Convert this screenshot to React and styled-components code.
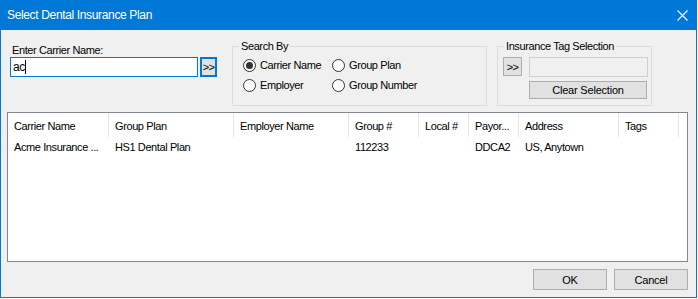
import React from 'react';
import styled, { createGlobalStyle } from 'styled-components';

const Global = createGlobalStyle`
  html, body { margin: 0; padding: 0; background: #ffffff; }
  body {
    font-family: "Liberation Sans", Arial, sans-serif;
    font-size: 11px;
    letter-spacing: -0.4px;
    color: #000;
  }
  #root { width: 698px; height: 299px; }
`;

const Window = styled.div`
  width: 697px;
  height: 298px;
  box-sizing: border-box;
  border: 1px solid #0078d7;
  border-top: none;
  background: #f0f0f0;
  display: flex;
  flex-direction: column;
`;

const TitleBar = styled.div`
  height: 30px;
  flex: none;
  background: #0078d7;
  color: #fff;
  display: flex;
  align-items: center;
  justify-content: space-between;
  padding: 0 8px 0 6px;
  font-size: 12px;
  letter-spacing: -0.35px;
`;

const Content = styled.div`
  flex: 1;
  display: flex;
  flex-direction: column;
  padding: 10px 8px 7px 6px;
  min-height: 0;
`;

const TopRow = styled.div`
  display: flex;
  align-items: flex-start;
  height: 66px;
  flex: none;
`;

const CarrierColumn = styled.div`
  margin-left: 3px;
  padding-top: 4px;
  width: 207px;
  display: flex;
  flex-direction: column;
`;

const Label = styled.div`
  line-height: 13px;
  height: 13px;
  padding-left: 2px;
`;

const InputRow = styled.div`
  display: flex;
  gap: 2px;
`;

const TextBox = styled.div`
  box-sizing: border-box;
  width: ${p => p.$w}px;
  height: 20px;
  border: 1px solid ${p => (p.$focused ? '#0078d7' : '#cfcfcf')};
  background: ${p => (p.$disabled ? '#f0f0f0' : '#ffffff')};
  display: flex;
  align-items: center;
  padding-left: 2px;
  font-size: 12px;
`;

const Caret = styled.span`
  display: inline-block;
  width: 1px;
  height: 14px;
  background: #000;
  margin-left: 0px;
`;

const Button = styled.div`
  box-sizing: border-box;
  width: ${p => p.$w}px;
  height: ${p => p.$h}px;
  background: #e1e1e1;
  border: ${p => (p.$default ? '2px solid #0078d7' : '1px solid #adadad')};
  display: flex;
  align-items: center;
  justify-content: center;
  flex: none;
  letter-spacing: ${p => (p.$tight ? '-0.6px' : '-0.2px')};
`;

const GroupBox = styled.div`
  position: relative;
  box-sizing: border-box;
  margin-top: 6px;
  margin-left: ${p => p.$ml}px;
  width: ${p => p.$w}px;
  height: 60px;
  border: 1px solid #dcdcdc;
  padding: ${p => p.$pad};
`;

const Caption = styled.span`
  position: absolute;
  top: -7px;
  left: 6px;
  padding: 0 2px;
  line-height: 13px;
  background: #f0f0f0;
`;

const RadioGrid = styled.div`
  display: grid;
  grid-template-columns: 89px auto;
  grid-auto-rows: 20px;
  align-items: center;
`;

const RadioItem = styled.div`
  display: flex;
  align-items: center;
  gap: 4px;
`;

const RadioCircle = styled.span`
  box-sizing: border-box;
  width: 13px;
  height: 13px;
  border-radius: 50%;
  border: 1px solid #333;
  background: #fff;
  display: flex;
  align-items: center;
  justify-content: center;
  &::after {
    content: '';
    width: 7px;
    height: 7px;
    border-radius: 50%;
    background: ${p => (p.$checked ? '#333' : 'transparent')};
  }
`;

const TagRow = styled.div`
  display: flex;
  gap: 7px;
  align-items: flex-start;
`;

const ClearRow = styled.div`
  margin-top: 4px;
  margin-left: 26px;
`;

const ListView = styled.div`
  flex: 1;
  margin-top: 6px;
  border: 1px solid #828790;
  background: #fff;
  min-height: 0;
`;

const cols = '101px 125px 115px 70px 50px 50px 100px 60px';

const HeaderRow = styled.div`
  display: grid;
  grid-template-columns: ${cols};
  height: 24px;
`;

const HeaderCell = styled.div`
  border-right: 1px solid #e5e5e5;
  padding: 2px 0 0 6px;
  display: flex;
  align-items: center;
  white-space: nowrap;
  overflow: hidden;
`;

const DataRow = styled.div`
  display: grid;
  grid-template-columns: ${cols};
  height: 19px;
`;

const DataCell = styled.div`
  padding-left: 6px;
  display: flex;
  align-items: center;
  white-space: nowrap;
  overflow: hidden;
`;

const ButtonBar = styled.div`
  display: flex;
  justify-content: flex-end;
  gap: 7px;
  margin-top: 7px;
  flex: none;
`;

const headers = ['Carrier Name', 'Group Plan', 'Employer Name', 'Group #', 'Local #', 'Payor...', 'Address', 'Tags'];
const rows = [['Acme Insurance ...', 'HS1 Dental Plan', '', '112233', '', 'DDCA2', 'US, Anytown', '']];

const Radio = ({ checked, children }) => (
  <RadioItem>
    <RadioCircle $checked={checked} />
    <span>{children}</span>
  </RadioItem>
);

export default function App() {
  return (
    <>
      <Global />
      <Window>
        <TitleBar>
          <span>Select Dental Insurance Plan</span>
          <svg width="11" height="11" viewBox="0 0 11 11">
            <path d="M0.5 0.5 L10.5 10.5 M10.5 0.5 L0.5 10.5" stroke="#fff" strokeWidth="1.1" fill="none" />
          </svg>
        </TitleBar>
        <Content>
          <TopRow>
            <CarrierColumn>
              <Label>Enter Carrier Name:</Label>
              <InputRow>
                <TextBox $w={189} $focused>
                  ac<Caret />
                </TextBox>
                <Button $w={17} $h={20} $default $tight>&gt;&gt;</Button>
              </InputRow>
            </CarrierColumn>
            <GroupBox $ml={15} $w={255} $pad="8px 0 0 10px">
              <Caption>Search By</Caption>
              <RadioGrid>
                <Radio checked>Carrier Name</Radio>
                <Radio>Group Plan</Radio>
                <Radio>Employer</Radio>
                <Radio>Group Number</Radio>
              </RadioGrid>
            </GroupBox>
            <GroupBox $ml={10} $w={155} $pad="10px 0 0 5px">
              <Caption>Insurance Tag Selection</Caption>
              <TagRow>
                <Button $w={19} $h={19} $tight>&gt;&gt;</Button>
                <TextBox $w={119} $disabled />
              </TagRow>
              <ClearRow>
                <Button $w={118} $h={18}>Clear Selection</Button>
              </ClearRow>
            </GroupBox>
          </TopRow>
          <ListView>
            <HeaderRow>
              {headers.map(h => (
                <HeaderCell key={h}>{h}</HeaderCell>
              ))}
            </HeaderRow>
            {rows.map((r, i) => (
              <DataRow key={i}>
                {r.map((c, j) => (
                  <DataCell key={j}>{c}</DataCell>
                ))}
              </DataRow>
            ))}
          </ListView>
          <ButtonBar>
            <Button $w={74} $h={21}>OK</Button>
            <Button $w={74} $h={21}>Cancel</Button>
          </ButtonBar>
        </Content>
      </Window>
    </>
  );
}
